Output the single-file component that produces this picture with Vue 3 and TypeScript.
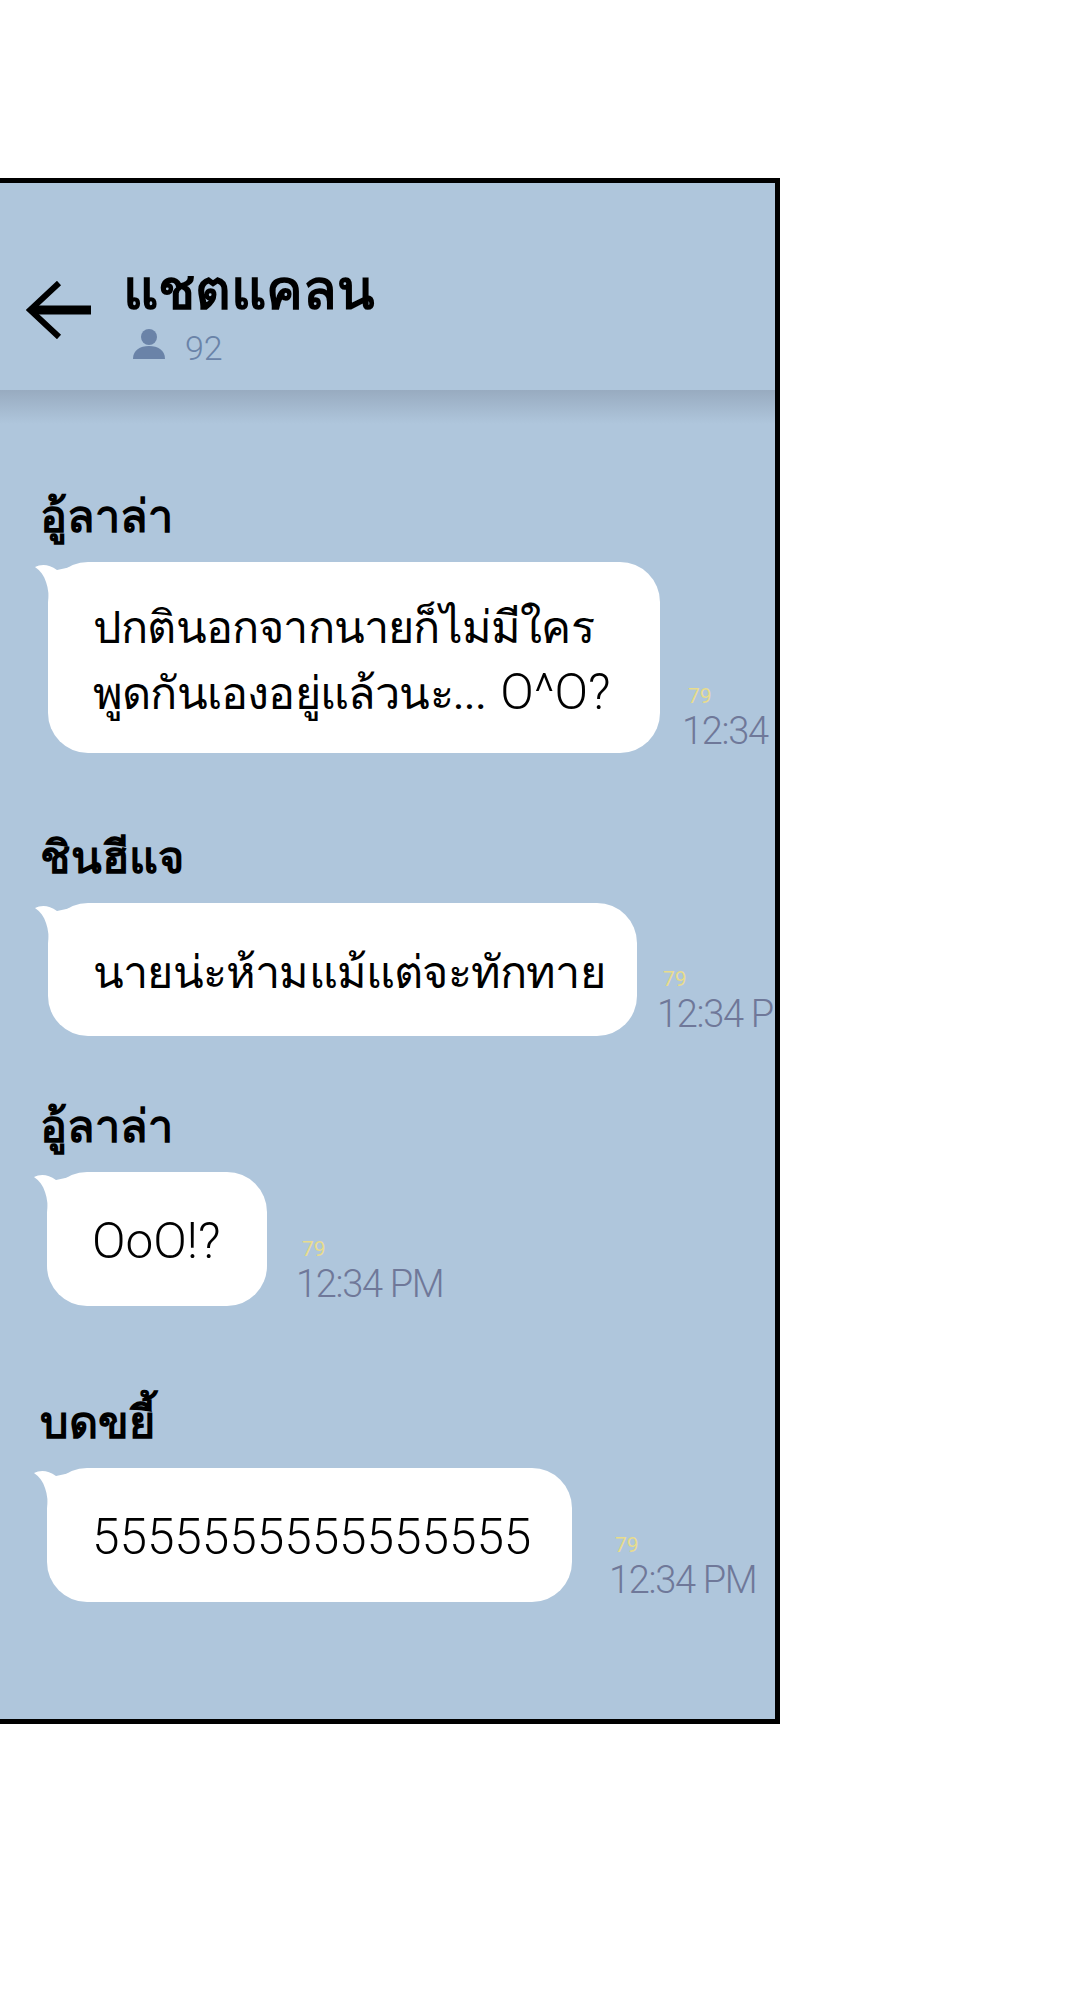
<template>
  <div class="page">
    <div class="chat">
      <header class="chat-header">
        <svg class="back" width="66" height="58" viewBox="0 0 66 58">
          <path d="M65 29H8" fill="none" stroke="#000" stroke-width="9" />
          <path d="M33 2 4 29l29 27" fill="none" stroke="#000" stroke-width="6" />
        </svg>
        <div class="head-info">
          <div class="title">แชตแคลน</div>
          <div class="members">
            <svg width="32" height="30" viewBox="0 0 32 30">
              <circle cx="16" cy="8" r="8" fill="#6a83a8" />
              <path d="M0 30c0-9 7-13 16-13s16 4 16 13z" fill="#6a83a8" />
            </svg>
            <span>92</span>
          </div>
        </div>
      </header>
      <div class="shade"></div>
      <div class="messages">
        <div v-for="m in messages" :key="m.id" class="message" :style="{ marginTop: m.top + 'px' }">
          <div class="name">{{ m.name }}</div>
          <div class="row">
            <div
              class="bubble"
              :style="{ width: m.width + 'px', paddingTop: m.padY + 3 + 'px', paddingBottom: m.padY - 3 + 'px', marginLeft: m.indent + 'px' }"
            >
              <svg class="tail" width="36" height="40" viewBox="0 0 36 40">
                <path d="M0 3C6 0 14 0 22 6L36 3V40H14C14 24 11 10 0 3z" fill="#fff" />
              </svg>
              <div v-for="(line, i) in m.lines" :key="i" class="line">{{ line.thai }}<span v-if="line.latin" class="latin">{{ line.latin }}</span></div>
            </div>
            <div class="meta" :style="{ marginLeft: m.timeGap + 'px' }">
              <span class="count">79</span>
              <span class="time">{{ m.time }}</span>
            </div>
          </div>
        </div>
      </div>
    </div>
  </div>
</template>

<script setup lang="ts">
interface Line {
  thai: string;
  latin?: string;
}

interface Message {
  id: number;
  name: string;
  lines: Line[];
  time: string;
  width: number;
  timeGap: number;
  top: number;
  padY: number;
  indent: number;
}

const messages: Message[] = [
  {
    id: 1,
    name: 'อู้ลาล่า',
    lines: [{ thai: 'ปกตินอกจากนายก็ไม่มีใคร' }, { thai: 'พูดกันเองอยู่แล้วนะ... ', latin: 'O^O?' }],
    time: '12:34',
    width: 612,
    timeGap: 22,
    top: 0,
    padY: 30,
    indent: 8
  },
  {
    id: 2,
    name: 'ชินฮีแจ',
    lines: [{ thai: 'นายน่ะห้ามแม้แต่จะทักทาย' }],
    time: '12:34 PM',
    width: 589,
    timeGap: 20,
    top: 80,
    padY: 34,
    indent: 8
  },
  { id: 3, name: 'อู้ลาล่า', lines: [{ thai: '', latin: 'OoO!?' }], time: '12:34 PM', width: 220, timeGap: 29, top: 66, padY: 34, indent: 7 },
  { id: 4, name: 'บดขยี้', lines: [{ thai: '', latin: '5555555555555555' }], time: '12:34 PM', width: 525, timeGap: 37, top: 92, padY: 34, indent: 7 }
];
</script>

<style scoped>
.page {
  padding-top: 178px;
  font-family: "Roboto", "Noto Sans", "Liberation Sans", sans-serif;
}

.chat {
  width: 780px;
  height: 1546px;
  box-sizing: border-box;
  background: #afc6dc;
  border: solid #000;
  border-width: 5px 5px 5px 0;
  overflow: hidden;
}

.chat-header {
  height: 207px;
  display: flex;
  align-items: flex-end;
  gap: 31px;
  padding: 0 0 20px 26px;
  box-sizing: border-box;
}

.back {
  margin-bottom: 31px;
  flex-shrink: 0;
}

.title {
  margin-bottom: -2px;
  font-size: 55px;
  font-weight: 700;
  line-height: 60px;
  color: #000;
}

.members {
  display: flex;
  align-items: center;
  gap: 20px;
  padding-left: 10px;
  color: #6a83a8;
  font-size: 34px;
  font-weight: 300;
  line-height: 44px;
}

.members span {
  margin-top: 8px;
}

.shade {
  height: 34px;
  background: linear-gradient(#98abc0, #afc6dc);
}

.messages {
  padding: 68px 0 0 40px;
}

.name {
  font-size: 45px;
  font-weight: 700;
  line-height: 50px;
  color: #000;
}

.row {
  display: flex;
  align-items: flex-end;
  margin-top: 20px;
}

.bubble {
  position: relative;
  padding-left: 45px;
  box-sizing: border-box;
  flex-shrink: 0;
  background: #fff;
  border-radius: 40px;
  font-size: 45px;
  line-height: 65px;
  letter-spacing: -0.8px;
  word-spacing: 4px;
  color: #000;
  white-space: pre;
}

.latin {
  font-size: 49.5px;
  font-weight: 300;
  letter-spacing: 0;
}

.tail {
  position: absolute;
  left: -13px;
  top: 2px;
}

.meta {
  display: flex;
  flex-direction: column;
  white-space: nowrap;
  flex-shrink: 0;
}

.count {
  margin-left: 6px;
  font-size: 21px;
  line-height: 26px;
  color: #e8dc8c;
}

.time {
  font-size: 38px;
  font-weight: 300;
  line-height: 44px;
  letter-spacing: -1.3px;
  color: #6f7899;
}
</style>

<style>
body {
  background: #fff;
}
</style>
